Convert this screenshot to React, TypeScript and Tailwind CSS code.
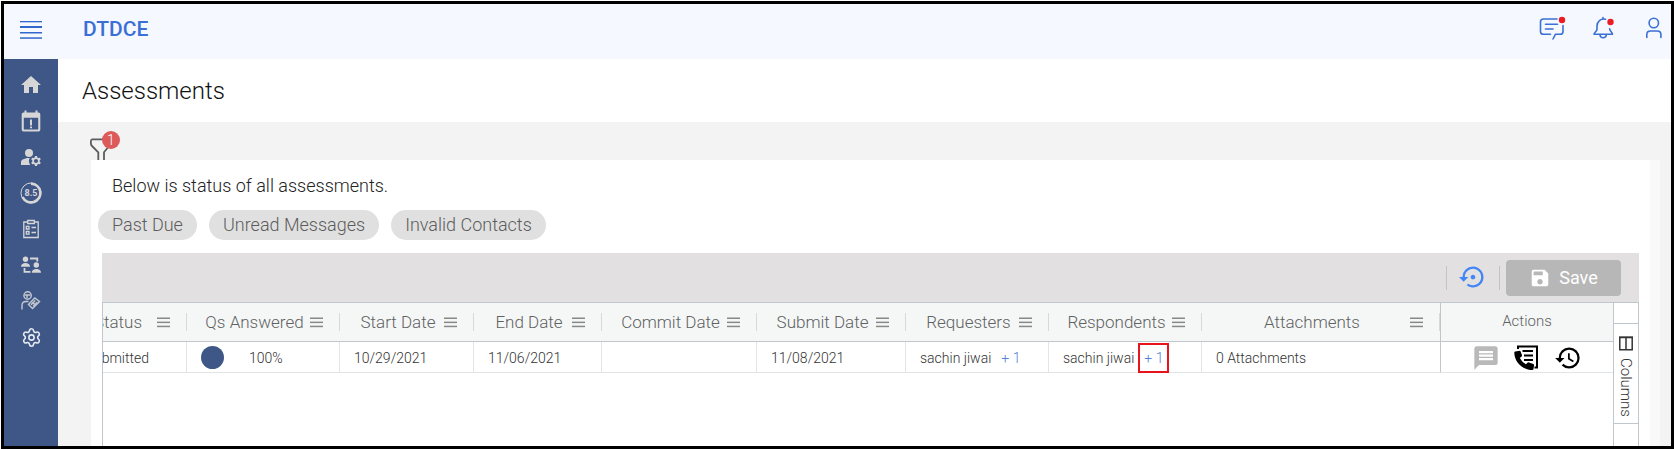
import type { ReactNode } from "react";
import { Settings } from "lucide-react";
import {
  MdHistory,
  MdHome,
  MdManageAccounts,
  MdMessage,
  MdSave,
  MdSettingsBackupRestore,
} from "react-icons/md";

interface NavItem {
  label: string;
  icon: ReactNode;
}

interface Column {
  label: string;
  width: string;
}

interface Person {
  name: string;
  more: number;
  highlighted?: boolean;
}

const MenuIcon = () => (
  <svg width="22" height="20" viewBox="0 0 22 20" fill="#3167cd">
    <rect x="0" y="1" width="22" height="1.3" />
    <rect x="0" y="6" width="22" height="2" />
    <rect x="0" y="12" width="22" height="1.5" />
    <rect x="0" y="17.3" width="22" height="1.5" />
  </svg>
);

const MessagesIcon = () => (
  <svg
    width="28"
    height="24"
    viewBox="0 0 28 24"
    fill="none"
    stroke="#3b70d4"
    strokeWidth="1.6"
    strokeLinecap="round"
    strokeLinejoin="round"
  >
    <path d="M18 3H4.5C2.6 3 1.5 4 1.5 5.8V15.4C1.5 17.2 2.6 18.2 4.5 18.2H11.5" />
    <path d="M24 9.5V15.4C24 17.2 23 18.2 21.2 18.2H16.5L14 23" />
    <path d="M6.5 8.2H18.5M6.5 13H14" />
    <circle cx="23" cy="4" r="3.2" fill="#ea1c24" stroke="none" />
  </svg>
);

const BellIcon = () => (
  <svg
    width="24"
    height="24"
    viewBox="0 0 24 24"
    fill="none"
    stroke="#3b70d4"
    strokeWidth="1.6"
    strokeLinecap="round"
    strokeLinejoin="round"
  >
    <path d="M13.5 3.3C8.8 2.2 5 5.4 5 10V13.5C5 15 2 16.5 2 18.3H20.5C20.5 16.5 17.6 15 17.6 12.8" />
    <path d="M11 2.8V1.5M8 18.8C8.3 22.8 14 22.8 14.3 18.8" />
    <circle cx="18.5" cy="6" r="3.2" fill="#ea1c24" stroke="none" />
  </svg>
);

const UserIcon = () => (
  <svg
    width="18"
    height="24"
    viewBox="0 0 18 24"
    fill="none"
    stroke="#3b70d4"
    strokeWidth="1.6"
    strokeLinecap="round"
  >
    <circle cx="8.8" cy="7" r="4.7" />
    <path d="M1.8 21.5V18.5C1.8 16.3 3.3 15 5.5 15H12.2C14.4 15 15.9 16.3 15.9 18.5V21.5" />
  </svg>
);

const FilterIcon = () => (
  <svg
    width="22"
    height="22"
    viewBox="0 0 22 22"
    fill="none"
    stroke="#5c5c5c"
    strokeWidth="1.8"
    strokeLinejoin="round"
  >
    <path d="M8.3 23V14.3L1.5 7.5C.5 5.5.6 1.3 2 1.3H19C20.300 1.300 20.300 5.500 19.500 7.500L14 14.300V23" />
  </svg>
);

const CalendarAlertIcon = () => (
  <svg width="20" height="22" viewBox="0 0 20 22" fill="#d6d6d6">
    <path
      fillRule="evenodd"
      d="M3.5.5H5.5V2.5H14.5V.5H16.5V2.5H17.5Q19.300 2.500 19.300 4.300V19.700Q19.300 21.500 17.500 21.500H2.500Q.7 21.500.7 19.700V4.300Q.7 2.500 2.500 2.500H3.500ZM2.800 7.800V19.500H17.200V7.800Z"
    />
    <path d="M9 9.500H11V15.500H9ZM9 16.500H11V18.300H9Z" />
  </svg>
);

const ScoreIcon = () => (
  <svg width="24" height="24" viewBox="0 0 24 24" fill="none" stroke="#d6d6d6">
    <circle cx="12" cy="12" r="10" strokeWidth="1" />
    <path d="M12 2.600A9.400 9.400 0 1 1 3.500 16" strokeWidth="2.600" />
    <text
      x="12"
      y="15"
      textAnchor="middle"
      fontFamily="Roboto, sans-serif"
      fontSize="9"
      fontWeight="700"
      fill="#d6d6d6"
      stroke="none"
    >
      8.5
    </text>
  </svg>
);

const ClipboardIcon = () => (
  <svg
    width="18"
    height="20"
    viewBox="0 0 18 20"
    fill="none"
    stroke="#d6d6d6"
    strokeWidth="1.3"
  >
    <path d="M5.5 3H1.800V18.500H16.200V3H12.500" />
    <path d="M5.700 1.500H12.300V4.500H5.700Z" />
    <path d="M9.500 8.500H14M9.500 13.500H14" strokeWidth="1.6" />
    <path d="M4.300 7.300H7V10H4.300ZM4.300 12.500H7V15.200H4.300Z" />
  </svg>
);

const PeopleSwapIcon = () => (
  <svg width="22" height="20" viewBox="0 0 22 20" fill="#d6d6d6">
    <circle cx="5.500" cy="4.200" r="2.700" />
    <path d="M1 11.800C1 9 3 7.900 5.500 7.900S10 9 10 11.800Z" />
    <circle cx="16.300" cy="10" r="2.700" />
    <path d="M11.800 17.800C11.800 15 13.800 13.900 16.300 13.900S21 15 21 17.800Z" />
    <path
      d="M10 3.500H17.300V6.500M4.500 13V16.800H10.500"
      fill="none"
      stroke="#d6d6d6"
      strokeWidth="1.8"
    />
  </svg>
);

const PersonTagIcon = () => (
  <svg
    width="22"
    height="22"
    viewBox="0 0 22 22"
    fill="none"
    stroke="#c4c8d0"
    strokeWidth="1.4"
  >
    <circle cx="7.600" cy="5.500" r="3.700" />
    <path d="M4.500 5H10.500M7 5V8" />
    <path d="M2 19.500V15.500C2 12.700 3.500 11.500 6 11.500H8.500" />
    <path d="M8.500 14.500L14.800 8L19.500 11.500L12.500 18.500Z" />
    <path
      d="M11 14.800L15.200 10.500M13.200 16.300L17.300 12.200M12.500 12.500L15.500 15"
      strokeWidth="1.6"
    />
  </svg>
);

const CallLogIcon = () => (
  <svg width="26" height="26" viewBox="0 0 26 26" fill="none" stroke="#000">
    <path d="M4 4V1.500H23V22.500H20.500" strokeWidth="2" />
    <path d="M8.500 6H19M10 10.500H19M10 15H19" strokeWidth="2" />
    <path
      fill="#000"
      stroke="none"
      d="M1.300 6.500L5.500 5.800Q6.300 5.700 6.600 6.500L8 10.300Q8.200 11 7.600 11.500L5.800 13Q7.800 17 12 19.300L13.700 17.600Q14.300 17.100 15 17.400L19.300 19Q20.200 19.300 20.100 20.200L19.500 24Q19.300 25 18.300 25C8.500 25 .3 17 .3 7.500Q.3 6.600 1.300 6.500Z"
    />
  </svg>
);

const ColumnsIcon = () => (
  <svg
    width="14"
    height="15"
    viewBox="0 0 14 15"
    fill="none"
    stroke="#333"
    strokeWidth="1.5"
  >
    <path d="M.8 1.500H13.200V13.800H.8ZM7 1.500V13.800" />
    <path d="M0 1.200H14" />
  </svg>
);

const navItems: NavItem[] = [
  { label: "Home", icon: <MdHome size={24} color="#d6d6d6" /> },
  { label: "Calendar", icon: <CalendarAlertIcon /> },
  { label: "Users", icon: <MdManageAccounts size={24} color="#d6d6d6" /> },
  { label: "Score", icon: <ScoreIcon /> },
  { label: "Assessments", icon: <ClipboardIcon /> },
  { label: "Contacts", icon: <PeopleSwapIcon /> },
  { label: "Vendors", icon: <PersonTagIcon /> },
  {
    label: "Settings",
    icon: <Settings size={21} color="#e8ebf1" strokeWidth={1.8} />,
  },
];

const quickFilters = ["Past Due", "Unread Messages", "Invalid Contacts"];

const columns: Column[] = [
  { label: "Status", width: "w-[84px]" },
  { label: "Qs Answered", width: "w-[153px]" },
  { label: "Start Date", width: "w-[134px]" },
  { label: "End Date", width: "w-[128px]" },
  { label: "Commit Date", width: "w-[155px]" },
  { label: "Submit Date", width: "w-[149px]" },
  { label: "Requesters", width: "w-[143px]" },
  { label: "Respondents", width: "w-[153px]" },
  { label: "Attachments", width: "w-auto" },
];

const cell =
  "h-[31px] border-r border-b border-[#e2e4e5] p-0 pt-px pl-[14px]";

const PersonCell = ({ name, more, highlighted }: Person) => (
  <td className={cell}>
    <div className="flex items-center gap-[10px] whitespace-nowrap">
      {name}

      <a href="#people" className="relative text-[#5580dc]">
        + {more}
        {highlighted && (
          <span className="absolute -inset-x-[6px] -inset-y-[5px] border-2 border-[#e8131d]" />
        )}
      </a>
    </div>
  </td>
);

const Header = () => (
  <header className="flex h-[55px] shrink-0 items-center bg-[#f5f8ff] pr-2 pb-1 pl-4">
    <button type="button" aria-label="Menu">
      <MenuIcon />
    </button>

    <h1 className="ml-[41px] text-[21px] font-medium text-[#3b6fd6]">DTDCE</h1>

    <div className="ml-auto flex items-center gap-[25px] pb-1">
      <button type="button" aria-label="Messages">
        <MessagesIcon />
      </button>

      <button type="button" aria-label="Notifications">
        <BellIcon />
      </button>

      <button type="button" aria-label="Profile" className="ml-1">
        <UserIcon />
      </button>
    </div>
  </header>
);

const Sidebar = () => (
  <nav className="flex w-[54px] shrink-0 flex-col bg-[#3f5787] pt-2">
    {navItems.map((item) => (
      <a
        key={item.label}
        href="#nav"
        aria-label={item.label}
        className="flex h-9 items-center justify-center"
      >
        {item.icon}
      </a>
    ))}
  </nav>
);

const Toolbar = () => (
  <div className="flex h-[49px] items-center justify-end bg-[#e2e0e1] pr-[18px]">
    <div className="flex h-6 items-center border-x border-[#c4c4c4] px-3 pb-[2px]">
      <button type="button" aria-label="Reset">
        <MdSettingsBackupRestore size={28} color="#4285f4" />
      </button>
    </div>

    <button
      type="button"
      className="ml-[6px] flex h-9 w-[115px] items-center justify-center gap-2 rounded-[4px] bg-[#b7b7b7] pt-px text-lg text-white"
    >
      <MdSave size={22} />
      Save
    </button>
  </div>
);

const AssessmentsTable = () => (
  <table className="w-full table-fixed border-separate border-spacing-0 text-sm text-[#333]">
    <colgroup>
      {columns.map((column) => (
        <col key={column.label} className={column.width} />
      ))}
      <col className="w-[173px]" />
    </colgroup>

    <thead>
      <tr className="h-[39px] bg-[#f5f7f7]">
        {columns.map((column) => (
          <th
            key={column.label}
            className="overflow-hidden border-b border-[#bfc7cc] p-0 text-[17px] font-light text-[#5f6262]"
          >
            <div className="flex h-[18px] items-center justify-end border-r border-[#d5d9db] pr-4 pl-4 whitespace-nowrap">
              <span
                className={
                  column.label === "Status" ? "mr-[15px]" : "mr-1 flex-1"
                }
              >
                {column.label}
              </span>

              <button type="button" aria-label={`${column.label} menu`}>
                <svg width="13" height="11" viewBox="0 0 13 11" fill="#868986">
                  <rect y="0.5" width="13" height="1.5" />
                  <rect y="4.6" width="13" height="1.5" />
                  <rect y="8.7" width="13" height="1.5" />
                </svg>
              </button>
            </div>
          </th>
        ))}

        <th className="border-b border-l border-[#bfc7cc] p-0 text-[15px] font-light text-[#5f6262]">
          Actions
        </th>
      </tr>
    </thead>

    <tbody className="font-light">
      <tr>
        <td className="h-[31px] overflow-hidden border-r border-b border-[#e2e4e5] p-0 pt-px pr-[37px]">
          <div className="flex justify-end">Submitted</div>
        </td>

        <td className={cell}>
          <div className="flex items-center gap-[25px]">
            <span className="size-[23px] rounded-full bg-[#3f5787]" />
            100%
          </div>
        </td>

        <td className={cell}>10/29/2021</td>
        <td className={cell}>11/06/2021</td>
        <td className={cell} />
        <td className={cell}>11/08/2021</td>

        <PersonCell name="sachin jiwai" more={1} />
        <PersonCell name="sachin jiwai" more={1} highlighted />

        <td className="h-[31px] border-b border-[#e2e4e5] p-0 pt-px pl-[14px]">
          0 Attachments
        </td>

        <td className="h-[31px] border-b border-l border-b-[#e2e4e5] border-l-[#bfc7cc] p-0 pt-px">
          <div className="flex items-center justify-center gap-[14px]">
            <button type="button" aria-label="Messages">
              <MdMessage size={28} color="#b9b9b9" />
            </button>

            <button type="button" aria-label="Call log">
              <CallLogIcon />
            </button>

            <button type="button" aria-label="History">
              <MdHistory size={28} color="#000" />
            </button>
          </div>
        </td>
      </tr>
    </tbody>
  </table>
);

const App = () => {
  return (
    <div className="flex h-screen bg-white py-px pl-px font-[Roboto,sans-serif]">
      <div className="flex min-w-0 flex-1 flex-col overflow-hidden border-3 border-black">
        <Header />

        <div className="flex min-h-0 flex-1">
          <Sidebar />

          <main className="flex min-w-0 flex-1 flex-col bg-[#f3f3f3]">
            <h2 className="flex h-[63px] shrink-0 items-center bg-white pl-6 text-2xl font-light text-[#111]">
              Assessments
            </h2>

            <div className="flex h-[38px] shrink-0 items-end pl-8">
              <button
                type="button"
                aria-label="Filters"
                className="relative h-[22px]"
              >
                <FilterIcon />
                <span className="absolute -top-[7px] left-3 flex size-[18px] items-center justify-center rounded-full bg-[#dd5a5b] text-sm font-light text-white">
                  1
                </span>
              </button>
            </div>

            <section className="mr-[11px] ml-[33px] flex min-h-0 flex-1 flex-col border-r-10 border-[#f9f9f9] bg-white">
              <p className="flex h-[50px] shrink-0 items-center pt-px pl-[21px] text-lg font-light text-[#222]">
                Below is status of all assessments.
              </p>

              <div className="flex gap-3 pl-[7px]">
                {quickFilters.map((filter) => (
                  <button
                    key={filter}
                    type="button"
                    className="h-[30px] rounded-full bg-[#e0e0e0] px-[14px] text-lg font-light text-[#5c5c5c]"
                  >
                    {filter}
                  </button>
                ))}
              </div>

              <div className="mx-[11px] mt-[13px] flex min-h-0 flex-1 flex-col">
                <Toolbar />

                <div className="flex min-h-0 flex-1 border-x border-t border-[#bfc7cc]">
                  <div className="min-w-0 flex-1 overflow-hidden">
                    <AssessmentsTable />
                  </div>

                  <aside className="w-[25px] shrink-0 border-l border-[#bfc7cc] pt-5">
                    <button
                      type="button"
                      className="flex h-[101px] w-full flex-col items-center gap-[7px] border-y border-[#bfc7cc] pt-3 text-[15px] font-light text-[#333]"
                    >
                      <ColumnsIcon />
                      <span className="[writing-mode:vertical-rl]">
                        Columns
                      </span>
                    </button>
                  </aside>
                </div>
              </div>
            </section>
          </main>
        </div>
      </div>
    </div>
  );
};

export default App;
